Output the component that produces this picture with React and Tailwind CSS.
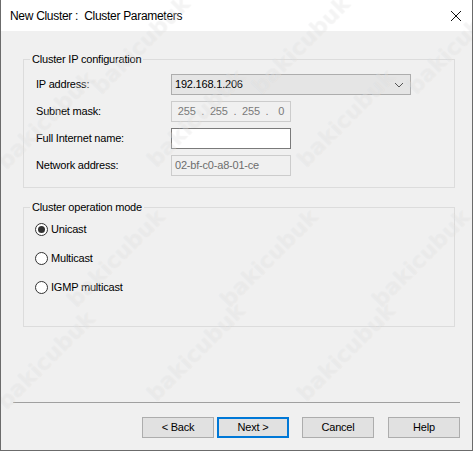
import { useState } from 'react';

const font = { fontFamily: '"Liberation Sans", Arial, sans-serif' };

// watermark centres, read off the screenshot
const marks = [
  [140, 45], [300, 45], [455, 45],
  [45, 120], [195, 118], [345, 118],
  [115, 258], [268, 258], [420, 258],
  [45, 360], [195, 352], [345, 352],
];

function Field({ children, disabled, className = '' }) {
  return (
    <div
      className={`h-[21px] flex items-center px-[3px] border ${
        disabled ? 'border-[#cccccc] text-[#6d6d6d] bg-[#f0f0f0]' : 'border-[#7a7a7a] bg-white text-black'
      } ${className}`}
    >
      {children}
    </div>
  );
}

function Radio({ label, checked, onClick }) {
  return (
    <button type="button" onClick={onClick} className="flex items-center gap-[3px] h-[14px] text-black">
      <span className="w-[13px] h-[13px] rounded-full border border-[#333333] bg-white flex items-center justify-center">
        {checked && <span className="w-[7px] h-[7px] rounded-full bg-[#333333]" />}
      </span>
      <span>{label}</span>
    </button>
  );
}

function Btn({ children, primary }) {
  return (
    <button
      type="button"
      className={`w-[72px] h-[21px] bg-[#e1e1e1] text-black flex items-center justify-center ${
        primary ? 'border-2 border-[#0078d7]' : 'border border-[#adadad]'
      }`}
    >
      {children}
    </button>
  );
}

export default function App() {
  const [mode, setMode] = useState('unicast');

  return (
    <div style={font} className="relative w-[473px] h-[451px] bg-[#f0f0f0] border-x border-b border-[#6b6b6b] flex flex-col overflow-hidden text-[11px] tracking-[-0.2px]">
      <div className="h-[31px] bg-white flex items-center justify-between pl-[9px] pr-[9px] shrink-0">
        <span className="text-[12px] tracking-[-0.3px] text-black">New Cluster :&nbsp; Cluster Parameters</span>
        <svg width="12" height="12" viewBox="0 0 12 12" className="mr-[1px]">
          <path d="M1 1 L11 11 M11 1 L1 11" stroke="#111" strokeWidth="1" />
        </svg>
      </div>

      <div className="pl-[22px] pr-[17px] pt-[21px] flex flex-col">
        <fieldset className="border border-[#dcdcdc] h-[136px] pl-[12px] pt-[8px]">
          <legend className="px-[2px] -ml-[6px] text-black leading-[14px]">Cluster IP configuration</legend>
          <div className="grid grid-cols-[135px_1fr] gap-y-[6px] text-black items-center">
            <span>IP address:</span>
            <div className="w-[240px] h-[21px] bg-[#e5e5e5] border border-[#adadad] flex items-center justify-between pl-[3px] pr-[6px]">
              <span>192.168.1.206</span>
              <svg width="10" height="6" viewBox="0 0 10 6">
                <path d="M1 1 L5 5 L9 1" stroke="#555" fill="none" strokeWidth="1" />
              </svg>
            </div>
            <span>Subnet mask:</span>
            <Field disabled className="w-[120px] border-[#9a9a9a] justify-around text-[#7a7a7a]">
              <span>255</span><span>.</span><span>255</span><span>.</span><span>255</span><span>.</span><span className="pl-[4px]">0</span>
            </Field>
            <span>Full Internet name:</span>
            <Field className="w-[120px]" />
            <span>Network address:</span>
            <Field disabled className="w-[120px]">02-bf-c0-a8-01-ce</Field>
          </div>
        </fieldset>

        <fieldset className="mt-[12px] border border-[#dcdcdc] h-[127px] pl-[11px] pt-[8px]">
          <legend className="px-[2px] -ml-[5px] text-black leading-[14px]">Cluster operation mode</legend>
          <div className="flex flex-col items-start gap-[15px]">
            <Radio label="Unicast" checked={mode === 'unicast'} onClick={() => setMode('unicast')} />
            <Radio label="Multicast" checked={mode === 'multicast'} onClick={() => setMode('multicast')} />
            <Radio label="IGMP multicast" checked={mode === 'igmp'} onClick={() => setMode('igmp')} />
          </div>
        </fieldset>
      </div>

      <div className="mt-auto mx-[12px] border-t border-[#a0a0a0]" />
      <div className="flex justify-end gap-[13px] pr-[12px] pt-[14px] pb-[12px]">
        <div className="flex gap-[3px]">
          <Btn>&lt; Back</Btn>
          <Btn primary>Next &gt;</Btn>
        </div>
        <div className="flex gap-[14px]">
          <Btn>Cancel</Btn>
          <Btn>Help</Btn>
        </div>
      </div>

      {marks.map(([x, y], i) => (
        <span
          key={i}
          aria-hidden="true"
          className="pointer-events-none select-none absolute -translate-x-1/2 -translate-y-1/2 -rotate-45 text-[22px] font-bold tracking-[0px] text-white/30 [text-shadow:0_0_1px_rgba(0,0,0,0.06)]"
          style={{ left: x, top: y, fontFamily: '"DejaVu Sans", sans-serif' }}
        >
          bakicubuk
        </span>
      ))}
    </div>
  );
}
